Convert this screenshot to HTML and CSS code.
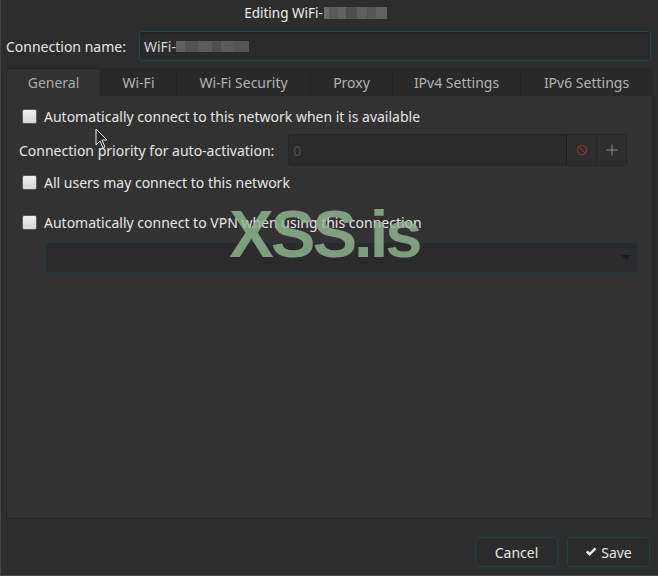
FILE: index.html
```html
<!DOCTYPE html>
<html>
<head>
<meta charset="utf-8">
<link rel="stylesheet" href="styles.css">
</head>
<body>
<div class="window">
  <div class="titlebar"><span>Editing WiFi-</span><span class="blur blur-title"></span></div>
  <div class="name-row">
    <label class="name-label">Connection name:</label>
    <div class="entry name-entry"><span>WiFi-</span><span class="blur blur-name"></span></div>
  </div>
  <div class="notebook">
    <div class="tabs">
      <div class="tab active t-general">General</div>
      <div class="tab t-wifi">Wi-Fi</div>
      <div class="tab t-sec">Wi-Fi Security</div>
      <div class="tab t-proxy">Proxy</div>
      <div class="tab t-ipv4">IPv4 Settings</div>
      <div class="tab t-ipv6">IPv6 Settings</div>
    </div>
    <div class="panel">
      <div class="check-row first"><span class="check"></span><span>Automatically connect to this network when it is available</span></div>
      <div class="prio-row">
        <span class="prio-label">Connection priority for auto-activation:</span>
        <div class="spin">
          <span class="spin-value">0</span>
          <span class="spin-btn minus">
            <svg width="12" height="12" viewBox="0 0 12 12"><circle cx="6" cy="6" r="4.7" fill="none" stroke="#7a3a34" stroke-width="1.2"/><line x1="2.8" y1="2.8" x2="9.2" y2="9.2" stroke="#7a3a34" stroke-width="1.2"/></svg>
          </span>
          <span class="spin-btn plus">
            <svg width="12" height="12" viewBox="0 0 12 12"><line x1="6" y1="0.5" x2="6" y2="11.5" stroke="#8a8a8a" stroke-width="1"/><line x1="0.5" y1="6" x2="11.5" y2="6" stroke="#8a8a8a" stroke-width="1"/></svg>
          </span>
        </div>
      </div>
      <div class="check-row users"><span class="check"></span><span>All users may connect to this network</span></div>
      <div class="check-row vpn"><span class="check"></span><span>Automatically connect to VPN when using this connection</span></div>
      <div class="combo">
        <svg width="10" height="6" viewBox="0 0 10 6"><path d="M0 0 H10 L5 5 Z" fill="#1c1c1c"/></svg>
      </div>
      <div class="watermark">XSS.is</div>
      <svg class="cursor" width="14" height="22" viewBox="0 0 14 22"><path d="M1 1 V17 L5 13 L8 20 L10 19 L7 12 H12 Z" fill="#2a2a2a" stroke="#e8e8e8" stroke-width="1"/></svg>
    </div>
  </div>
  <div class="actions">
    <button class="btn cancel">Cancel</button>
    <button class="btn save"><svg width="12" height="10" viewBox="0 0 12 10"><path d="M0.8 5.2 L2.8 3.4 L4.6 5.4 L9.6 0.6 L11.4 2.3 L4.6 9 Z" fill="#e6e6e6"/></svg>Save</button>
  </div>
</div>
</body>
</html>
```

FILE: styles.css
```css
* { box-sizing: border-box; }
html, body { margin: 0; padding: 0; }
body {
  background: #2d2d2d;
  font-family: "Noto Sans", "Open Sans", sans-serif;
  font-size: 14px;
  color: #e3e3e3;
}
.window {
  width: 658px;
  height: 576px;
  border-left: 1px solid #454545;
  border-bottom: 1px solid #454545;
  background: #2d2d2d;
  display: flex;
  flex-direction: column;
}
.titlebar {
  height: 25px;
  display: flex;
  justify-content: center;
  align-items: center;
  font-size: 13.5px;
  color: #ececec;
  padding-right: 28px;
}
.blur {
  display: inline-block;
  height: 12px;
  background: linear-gradient(90deg, #6a6a6a 0 8%, #5a5a5a 8% 22%, #616161 22% 35%, #4e4e4e 35% 52%, #5f5f5f 52% 68%, #555 68% 82%, #626262 82% 100%);
}
.blur-title { width: 63px; margin-left: 1px; }
.blur-name { width: 73px; height: 11px; background: linear-gradient(90deg, #5e5e5e 0 12%, #545454 12% 30%, #5c5c5c 30% 50%, #4f4f4f 50% 62%, #5a5a5a 62% 80%, #565656 80% 100%); }
.name-row {
  display: flex;
  align-items: center;
  padding: 6px 7px 0 5px;
  gap: 13px;
}
.name-label { color: #e6e6e6; }
.entry {
  flex: 1;
  height: 30px;
  border: 1px solid #1d4646;
  border-radius: 3px;
  background: #2a2a2a;
  display: flex;
  align-items: center;
  padding-left: 4px;
  color: #cfd6de;
  box-shadow: inset 0 1px 2px rgba(0,0,0,0.25);
}
.notebook {
  margin: 7px 5px 0 5px;
  height: 451px;
  display: flex;
  flex-direction: column;
}
.tabs {
  display: flex;
  height: 28px;
}
.tab {
  display: flex;
  align-items: center;
  justify-content: center;
  background: #292929;
  color: #b3b3b3;
  border-top: 1px solid #262626;
  border-right: 1px solid #242424;
  flex: none;
}
.tab.active {
  background: #323232;
  border: 1px solid #262626;
  border-bottom: none;
  border-radius: 4px 4px 0 0;
  color: #a9a9a9;
}
.t-general { width: 95px; }
.t-wifi { width: 76px; }
.t-sec { width: 134px; }
.t-proxy { width: 82px; }
.t-ipv4 { width: 128px; }
.t-ipv6 { flex: 1; border-right: 1px solid #262626; border-radius: 0 4px 0 0; }
.panel {
  position: relative;
  flex: 1;
  background: #323232;
  border: 1px solid #262626;
  border-top: none;
  padding: 0 0 0 12px;
}
.check-row {
  display: flex;
  align-items: center;
  height: 24px;
  gap: 7px;
  margin-left: 3px;
  color: #e6e6e6;
}
.check-row.first { margin-top: 8px; }
.check {
  width: 15px;
  height: 15px;
  border-radius: 2px;
  background: linear-gradient(#f0f0f0, #d6d6d6);
  border: 1px solid #5a5a5a;
}
.prio-row {
  display: flex;
  align-items: center;
  margin: 6px 0 0 0;
  gap: 14px;
}
.prio-label { color: #e6e6e6; }
.spin {
  width: 339px;
  height: 32px;
  display: flex;
  border: 1px solid #262626;
  border-radius: 3px;
  background: #2b2b2b;
}
.spin-value {
  flex: 1;
  display: flex;
  align-items: center;
  padding-left: 4px;
  color: #4e4e4e;
}
.spin-btn {
  width: 30px;
  display: flex;
  align-items: center;
  justify-content: center;
  border-left: 1px solid #1e1e1e;
  background: #2e2e2e;
}
.spin-btn.plus { border-left-color: #262626; }
.check-row.users { margin-top: 4px; }
.check-row.vpn { margin-top: 16px; }
.combo {
  margin: 8px 0 0 26px;
  width: 593px;
  height: 31px;
  border: 1px solid #1b3d3d;
  border-radius: 3px;
  background: #2b2b2b;
  display: flex;
  align-items: center;
  justify-content: flex-end;
  padding-right: 6px;
}
.watermark {
  position: absolute;
  left: 222px;
  top: 105px;
  font-family: "Liberation Sans", Arial, sans-serif;
  font-weight: bold;
  font-size: 67px;
  line-height: 66px;
  letter-spacing: -3px;
  color: rgba(145, 182, 145, 0.82);
  pointer-events: none;
}
.cursor {
  position: absolute;
  left: 88px;
  top: 32px;
}
.actions {
  display: flex;
  justify-content: flex-end;
  gap: 9px;
  padding: 18px 8px 0 0;
}
.btn {
  height: 30px;
  width: 83px;
  border: 1px solid #1d4242;
  border-radius: 3px;
  background: #2b2b2b;
  color: #e6e6e6;
  font-family: "Noto Sans", "Open Sans", sans-serif;
  font-size: 14px;
  display: flex;
  align-items: center;
  justify-content: center;
  gap: 4px;
  padding: 0;
}
```
